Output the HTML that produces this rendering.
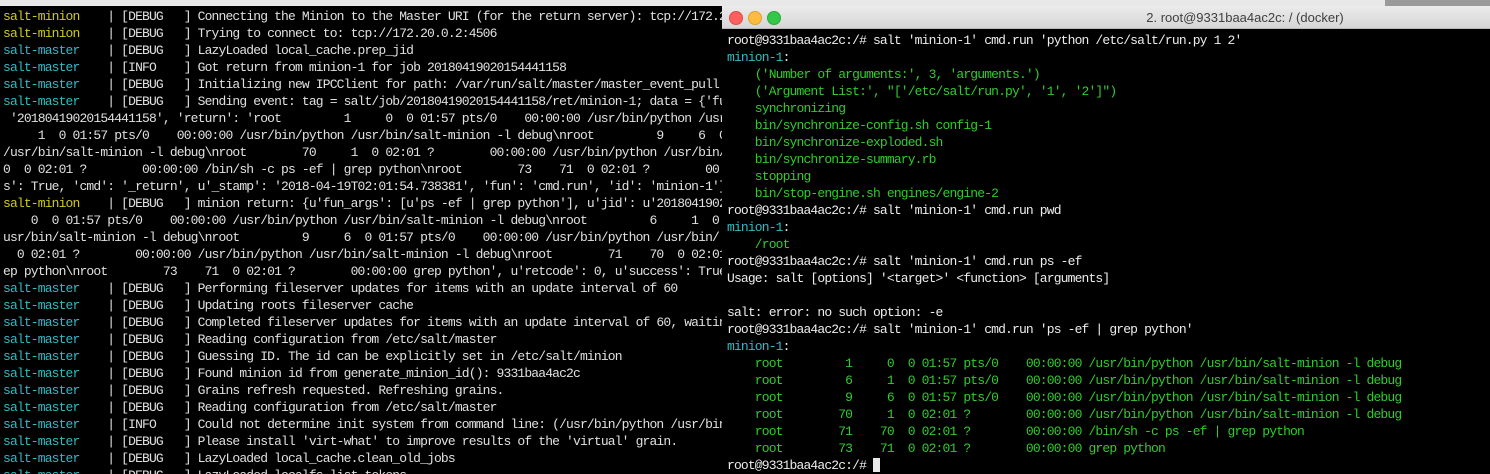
<!DOCTYPE html>
<html><head><meta charset="utf-8"><style>
html,body{margin:0;padding:0;width:1490px;height:474px;overflow:hidden;background:#000;}
.top{position:absolute;left:0;top:0;width:1490px;height:6px;background:#e8e8e8;}
.topimg{position:absolute;left:1385px;top:0;width:105px;height:6px;background:#9a9a9a;}
pre{margin:0;font-family:"Liberation Mono",monospace;font-size:13px;letter-spacing:-0.85px;line-height:17px;white-space:pre;}
#L{position:absolute;left:0;top:6px;width:722px;height:468px;background:#000;overflow:hidden;}
#L pre{position:absolute;left:3px;top:1.5px;color:#e0e0e0;}
.y{color:#d0cc1a}.c{color:#2fbcc4}.g{color:#30cc2c}
#R{position:absolute;left:722px;top:6px;width:768px;height:468px;background:#000;overflow:hidden;}
#tb{position:absolute;left:0;top:0;width:768px;height:22px;background:linear-gradient(#ececec,#d6d6d6);border-bottom:1px solid #b8b8b8;}
.dot{position:absolute;top:5px;width:12px;height:12px;border-radius:50%;}
#tt{position:absolute;left:0;top:4px;width:1046px;text-align:center;font:13px "Liberation Sans",sans-serif;color:#404040;}
#R pre{position:absolute;left:5px;top:25.5px;color:#ededed;}
.cur{display:inline-block;width:7px;height:14px;background:#e8e8e8;vertical-align:-3px;}
</style></head><body>
<div class="top"></div><div class="topimg"></div>
<div id="L"><pre><span class="y">salt-minion</span>    | [DEBUG   ] Connecting the Minion to the Master URI (for the return server): tcp://172.20.0.2:4506
<span class="y">salt-minion</span>    | [DEBUG   ] Trying to connect to: tcp://172.20.0.2:4506
<span class="c">salt-master</span>    | [DEBUG   ] LazyLoaded local_cache.prep_jid
<span class="c">salt-master</span>    | [INFO    ] Got return from minion-1 for job 20180419020154441158
<span class="c">salt-master</span>    | [DEBUG   ] Initializing new IPCClient for path: /var/run/salt/master/master_event_pull.ipc
<span class="c">salt-master</span>    | [DEBUG   ] Sending event: tag = salt/job/20180419020154441158/ret/minion-1; data = {'fun_args'
 '20180419020154441158', 'return': 'root         1     0  0 01:57 pts/0    00:00:00 /usr/bin/python /usr
     1  0 01:57 pts/0    00:00:00 /usr/bin/python /usr/bin/salt-minion -l debug\nroot         9     6  0
/usr/bin/salt-minion -l debug\nroot        70     1  0 02:01 ?        00:00:00 /usr/bin/python /usr/bin/
0  0 02:01 ?        00:00:00 /bin/sh -c ps -ef | grep python\nroot        73    71  0 02:01 ?        00:0
s': True, 'cmd': '_return', u'_stamp': '2018-04-19T02:01:54.738381', 'fun': 'cmd.run', 'id': 'minion-1'}
<span class="y">salt-minion</span>    | [DEBUG   ] minion return: {u'fun_args': [u'ps -ef | grep python'], u'jid': u'20180419020
    0  0 01:57 pts/0    00:00:00 /usr/bin/python /usr/bin/salt-minion -l debug\nroot         6     1  0
usr/bin/salt-minion -l debug\nroot         9     6  0 01:57 pts/0    00:00:00 /usr/bin/python /usr/bin/
  0 02:01 ?        00:00:00 /usr/bin/python /usr/bin/salt-minion -l debug\nroot        71    70  0 02:01
ep python\nroot        73    71  0 02:01 ?        00:00:00 grep python', u'retcode': 0, u'success': True
<span class="c">salt-master</span>    | [DEBUG   ] Performing fileserver updates for items with an update interval of 60
<span class="c">salt-master</span>    | [DEBUG   ] Updating roots fileserver cache
<span class="c">salt-master</span>    | [DEBUG   ] Completed fileserver updates for items with an update interval of 60, waiting
<span class="c">salt-master</span>    | [DEBUG   ] Reading configuration from /etc/salt/master
<span class="c">salt-master</span>    | [DEBUG   ] Guessing ID. The id can be explicitly set in /etc/salt/minion
<span class="c">salt-master</span>    | [DEBUG   ] Found minion id from generate_minion_id(): 9331baa4ac2c
<span class="c">salt-master</span>    | [DEBUG   ] Grains refresh requested. Refreshing grains.
<span class="c">salt-master</span>    | [DEBUG   ] Reading configuration from /etc/salt/master
<span class="c">salt-master</span>    | [INFO    ] Could not determine init system from command line: (/usr/bin/python /usr/bin
<span class="c">salt-master</span>    | [DEBUG   ] Please install 'virt-what' to improve results of the 'virtual' grain.
<span class="c">salt-master</span>    | [DEBUG   ] LazyLoaded local_cache.clean_old_jobs
<span class="c">salt-master</span>    | [DEBUG   ] LazyLoaded localfs.list_tokens</pre></div>
<div id="R">
<div id="tb">
<div class="dot" style="left:7px;background:#fc605c;border:0.5px solid #de4a46"></div>
<div class="dot" style="left:26px;background:#fdbc40;border:0.5px solid #de9f2e"></div>
<div class="dot" style="left:45px;background:#34c84a;border:0.5px solid #27aa35"></div>
<div id="tt">2. root@9331baa4ac2c: / (docker)</div>
</div>
<pre>root@9331baa4ac2c:/# salt 'minion-1' cmd.run 'python /etc/salt/run.py 1 2'
<span class="c">minion-1</span>:
<span class="g">    ('Number of arguments:', 3, 'arguments.')
    ('Argument List:', "['/etc/salt/run.py', '1', '2']")
    synchronizing
    bin/synchronize-config.sh config-1
    bin/synchronize-exploded.sh
    bin/synchronize-summary.rb
    stopping
    bin/stop-engine.sh engines/engine-2</span>
root@9331baa4ac2c:/# salt 'minion-1' cmd.run pwd
<span class="c">minion-1</span>:
<span class="g">    /root</span>
root@9331baa4ac2c:/# salt 'minion-1' cmd.run ps -ef
Usage: salt [options] '&lt;target&gt;' &lt;function&gt; [arguments]

salt: error: no such option: -e
root@9331baa4ac2c:/# salt 'minion-1' cmd.run 'ps -ef | grep python'
<span class="c">minion-1</span>:
<span class="g">    root         1     0  0 01:57 pts/0    00:00:00 /usr/bin/python /usr/bin/salt-minion -l debug
    root         6     1  0 01:57 pts/0    00:00:00 /usr/bin/python /usr/bin/salt-minion -l debug
    root         9     6  0 01:57 pts/0    00:00:00 /usr/bin/python /usr/bin/salt-minion -l debug
    root        70     1  0 02:01 ?        00:00:00 /usr/bin/python /usr/bin/salt-minion -l debug
    root        71    70  0 02:01 ?        00:00:00 /bin/sh -c ps -ef | grep python
    root        73    71  0 02:01 ?        00:00:00 grep python</span>
root@9331baa4ac2c:/# <span class="cur"></span></pre>
</div>
</body></html>
